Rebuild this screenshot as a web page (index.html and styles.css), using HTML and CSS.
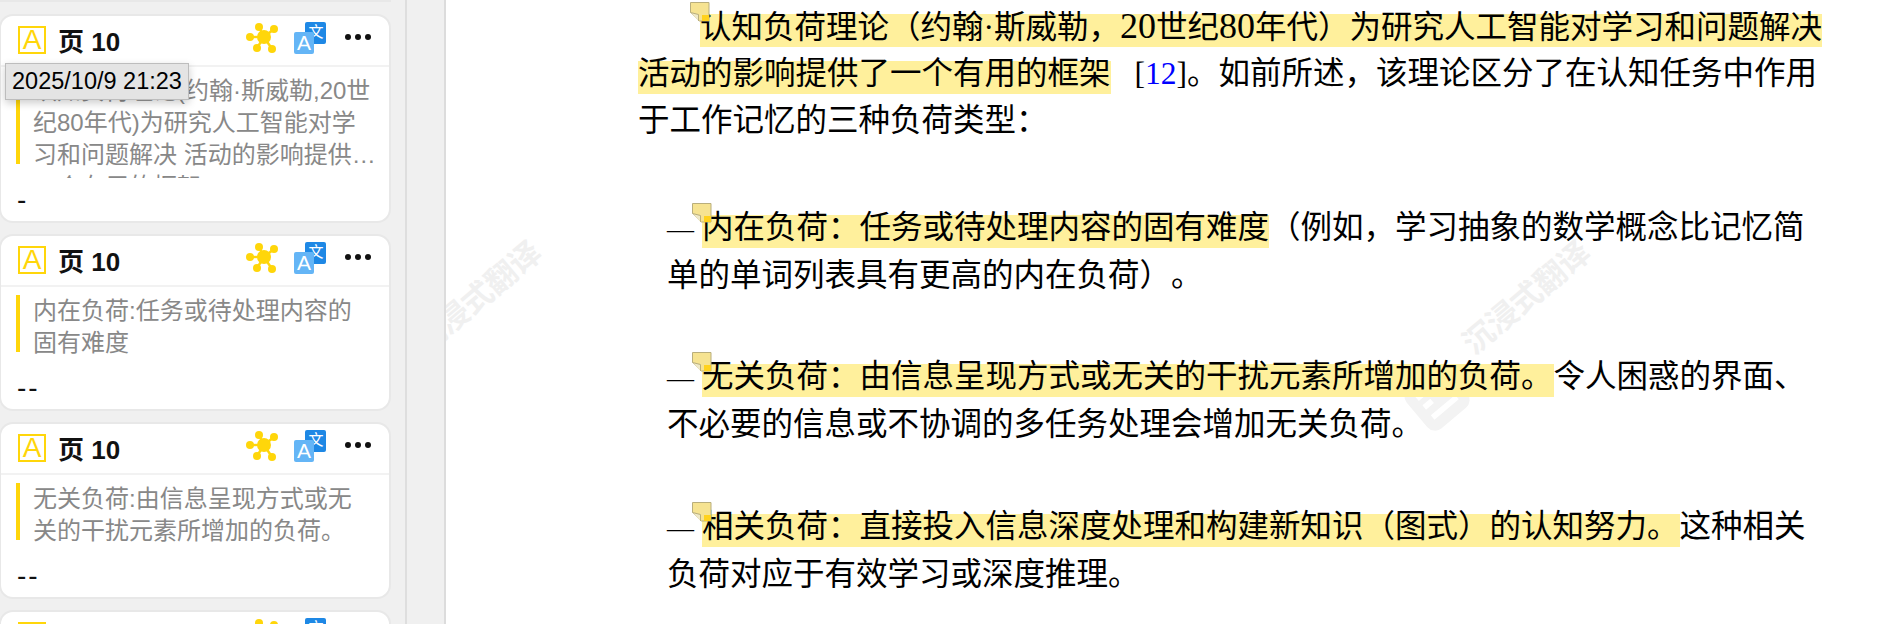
FILE: index.html
```html
<!DOCTYPE html>
<html lang="en">
<head>
<meta charset="UTF-8">
<title>PDF annotations</title>
<link rel="stylesheet" href="styles.css">
</head>
<body>

<svg class="defs" width="0" height="0">
    <symbol id="mindmap" viewBox="0 0 32 32">
        <g stroke="#ffd60a" stroke-width="2.4">
            <line x1="18" y1="14" x2="13" y2="4"/>
            <line x1="18" y1="14" x2="28" y2="6"/>
            <line x1="18" y1="14" x2="4" y2="14"/>
            <line x1="18" y1="14" x2="11" y2="25"/>
            <line x1="18" y1="14" x2="26" y2="26"/>
        </g>
        <g fill="#ffd60a">
            <circle cx="18" cy="14" r="7"/>
            <circle cx="13" cy="4" r="4"/>
            <circle cx="28" cy="6" r="4"/>
            <circle cx="4" cy="14" r="4"/>
            <circle cx="11" cy="25" r="4"/>
            <circle cx="26" cy="26" r="4"/>
        </g>
    </symbol>
    <symbol id="translate" viewBox="0 0 32 32">
        <rect x="11" y="0" width="21" height="22" rx="2" fill="#1e88e5"/>
        <text x="22" y="15" text-anchor="middle" class="glyph-back">文</text>
        <rect x="0" y="10" width="20" height="22" rx="2" fill="#64b5f6"/>
        <text x="10" y="28" text-anchor="middle" class="glyph-front">A</text>
    </symbol>
    <symbol id="note" viewBox="0 0 20 20">
        <path d="M.5.5h18.5v18.5H9.5L.5 10.5z" fill="#f6e391" stroke="#b9ae7c"/>
        <path d="M.5 10.5l8 2v6.5" fill="#efe9c8" stroke="#b9ae7c"/>
        <rect x="12" y="13" width="7" height="6" fill="#ffd21e"/>
    </symbol>
</svg>

<div class="sidebar">
    <div class="stub"></div>

    <div class="card card-tall">
        <div class="card-head">
            <span class="mark">A</span>
            <span class="page-no">页 10</span>
            <svg class="ic-map"><use href="#mindmap"/></svg>
            <svg class="ic-tr"><use href="#translate"/></svg>
            <span class="dots"><i></i><i></i><i></i></span>
        </div>
        <div class="quote quote-long">
            <div class="quote-text clamped">认知负荷理论(约翰·斯威勒,20世纪80年代)为研究人工智能对学习和问题解决 活动的影响提供了一个有用的框架</div>
        </div>
        <div class="note-text">-</div>
    </div>

    <div class="card">
        <div class="card-head">
            <span class="mark">A</span>
            <span class="page-no">页 10</span>
            <svg class="ic-map"><use href="#mindmap"/></svg>
            <svg class="ic-tr"><use href="#translate"/></svg>
            <span class="dots"><i></i><i></i><i></i></span>
        </div>
        <div class="quote">
            <div class="quote-text">内在负荷:任务或待处理内容的固有难度</div>
        </div>
        <div class="note-text">--</div>
    </div>

    <div class="card">
        <div class="card-head">
            <span class="mark">A</span>
            <span class="page-no">页 10</span>
            <svg class="ic-map"><use href="#mindmap"/></svg>
            <svg class="ic-tr"><use href="#translate"/></svg>
            <span class="dots"><i></i><i></i><i></i></span>
        </div>
        <div class="quote">
            <div class="quote-text">无关负荷:由信息呈现方式或无关的干扰元素所增加的负荷。</div>
        </div>
        <div class="note-text">--</div>
    </div>

    <div class="card">
        <div class="card-head">
            <span class="mark">A</span>
            <span class="page-no">页 10</span>
            <svg class="ic-map"><use href="#mindmap"/></svg>
            <svg class="ic-tr"><use href="#translate"/></svg>
            <span class="dots"><i></i><i></i><i></i></span>
        </div>
    </div>

    <div class="tooltip">2025/10/9 21:23</div>
</div>

<div class="gutter"></div>

<div class="page">
    <div class="watermark wm-left">
        <span class="wm-text">沉浸式翻译</span>
    </div>
    <div class="watermark wm-right">
        <svg class="wm-logo" viewBox="0 0 60 60">
            <rect x="2" y="2" width="56" height="56" rx="11" fill="#f3f3f3"/>
            <path d="M13 17h15M13 29h11M13 43h34M39 15v18" fill="none" stroke="#fff" stroke-width="6"/>
        </svg>
        <span class="wm-text">沉浸式翻译</span>
    </div>

    <div class="lines">
        <div class="line indent"><span class="hl"><svg class="sticky"><use href="#note"/></svg>认知负荷理论（约翰·斯威勒，<span class="num">20</span>世纪<span class="num">80</span>年代）为研究人工智能对学习和问题解决</span></div>
        <div class="line"><span class="hl">活动的影响提供了一个有用的框架</span><span class="cite">[<a class="ref">12</a>]</span>。如前所述，该理论区分了在认知任务中作用</div>
        <div class="line">于工作记忆的三种负荷类型：</div>
    </div>

    <div class="item item-1">
        <div class="line"><span class="dash">—</span><span class="hl"><svg class="sticky"><use href="#note"/></svg>内在负荷：任务或待处理内容的固有难度</span>（例如，学习抽象的数学概念比记忆简</div>
        <div class="line">单的单词列表具有更高的内在负荷）。</div>
    </div>

    <div class="item item-2">
        <div class="line"><span class="dash">—</span><span class="hl hl-tail"><svg class="sticky"><use href="#note"/></svg>无关负荷：由信息呈现方式或无关的干扰元素所增加的负荷。</span>令人困惑的界面、</div>
        <div class="line">不必要的信息或不协调的多任务处理会增加无关负荷。</div>
    </div>

    <div class="item item-3">
        <div class="line"><span class="dash">—</span><span class="hl hl-tail"><svg class="sticky"><use href="#note"/></svg>相关负荷：直接投入信息深度处理和构建新知识（图式）的认知努力。</span>这种相关</div>
        <div class="line">负荷对应于有效学习或深度推理。</div>
    </div>
</div>

</body>
</html>
```

FILE: styles.css
```css
* {
    box-sizing: border-box;
}
html, body {
    height: 100%;
}
body {
    margin: 0;
    display: flex;
    overflow: hidden;
    background: #fff;
    font-family: "Liberation Sans", "Noto Sans CJK SC", sans-serif;
}
.defs {
    position: absolute;
}
.glyph-back {
    font: 15px "Noto Sans CJK SC", sans-serif;
    fill: #fff;
}
.glyph-front {
    font: 21px "Liberation Sans", sans-serif;
    fill: #fff;
}

/* left column */
.sidebar {
    position: relative;
    width: 405px;
    height: 624px;
    overflow: hidden;
    flex-shrink: 0;
    background: #f0f0f0;
}
.stub {
    width: 392px;
    height: 2px;
    margin: 0 0 12px -1px;
    background: #e8e8e8;
}
.card {
    width: 392px;
    height: 177px;
    margin: 0 0 11px -1px;
    background: #fff;
    border: 2px solid #e8e8e8;
    border-radius: 14px;
}
.card-tall {
    height: 209px;
}
.card-head {
    display: flex;
    align-items: center;
    height: 51px;
    padding: 0 0 2px 17px;
    border-bottom: 2px solid #f2f2f2;
}
.mark {
    display: flex;
    align-items: center;
    justify-content: center;
    width: 28px;
    height: 28px;
    border: 2px solid #ffd60a;
    color: #ffd60a;
    font-size: 28px;
    line-height: 1;
}
.page-no {
    width: 188px;
    margin-left: 12px;
    font-size: 26px;
    font-weight: 700;
    color: #111;
}
.ic-map {
    width: 32px;
    height: 32px;
    margin-top: -1px;
}
.ic-tr {
    width: 32px;
    height: 32px;
    margin: -3px 0 0 16px;
}
.dots {
    display: flex;
    gap: 4px;
    margin: -5px 0 0 19px;
}
.dots i {
    width: 6px;
    height: 6px;
    border-radius: 50%;
    background: #111;
}
.quote {
    height: 57px;
    margin: 9px 0 0 15px;
    padding-left: 13px;
    border-left: 4px solid #ffd60a;
}
.quote-long {
    height: 89px;
}
.quote-text {
    width: 342px;
    margin-top: -1px;
    font-size: 24px;
    line-height: 32px;
    color: #888;
}
.clamped {
    display: -webkit-box;
    -webkit-box-orient: vertical;
    -webkit-line-clamp: 3;
    width: 345px;
    height: 103px;
    overflow: hidden;
}
.note-text {
    height: 32px;
    margin: 20px 0 0 16px;
    font-size: 28px;
    line-height: 32px;
    letter-spacing: 2px;
    color: #111;
}
.tooltip {
    position: absolute;
    left: 5px;
    top: 63px;
    width: 184px;
    height: 37px;
    border: 1px solid #bdbdbd;
    background: #e4e4e4;
    box-shadow: 0 3px 8px rgba(0, 0, 0, .2);
    padding-left: 6px;
    font-size: 23.5px;
    line-height: 35px;
    color: #000;
    white-space: nowrap;
}

.gutter {
    width: 41px;
    flex-shrink: 0;
    background: #f0f0f0;
    border-left: 2px solid #dedede;
    border-right: 2px solid #dcdcdc;
}

/* pdf page */
.page {
    position: relative;
    flex: 1;
    height: 624px;
    overflow: hidden;
    padding: 14px 0 0 192px;
    font-family: "Liberation Serif", "Noto Sans CJK SC", serif;
    font-size: 31.5px;
    color: #000;
    text-spacing-trim: space-all;
}
.line {
    height: 33px;
    line-height: 25px;
    white-space: nowrap;
    margin-bottom: 14px;
}
.indent {
    padding-left: 62px;
}
.num {
    font-size: 36px;
}
.hl {
    position: relative;
    display: inline-block;
    height: 33px;
    background: #fff09c;
}
.hl-tail {
    padding-right: 1px;
}
.cite {
    margin-left: 24px;
}
.ref {
    color: #00f;
}
.dash {
    display: inline-block;
    width: 35px;
    font-size: 27px;
}
.item {
    padding-left: 29px;
}
.item .line {
    margin-bottom: 15px;
}
.item-1 {
    margin-top: 74px;
}
.item-2 {
    margin-top: 68px;
}
.item-3 {
    margin-top: 69px;
}
.sticky {
    position: absolute;
    left: -10px;
    top: -12px;
    width: 20px;
    height: 20px;
}
.watermark {
    position: absolute;
    top: 0;
    left: 0;
}
.wm-text {
    position: absolute;
    top: 276px;
    width: 190px;
    font-family: "Noto Sans CJK SC", sans-serif;
    font-size: 31px;
    font-weight: 700;
    line-height: 40px;
    text-align: center;
    color: #f0f0f0;
    transform: rotate(-40deg);
    white-space: nowrap;
}
.wm-left .wm-text {
    left: -65px;
}
.wm-right .wm-text {
    left: 984px;
}
.wm-logo {
    position: absolute;
    left: 963px;
    top: 370px;
    width: 56px;
    height: 56px;
    transform: rotate(-40deg);
}
```
